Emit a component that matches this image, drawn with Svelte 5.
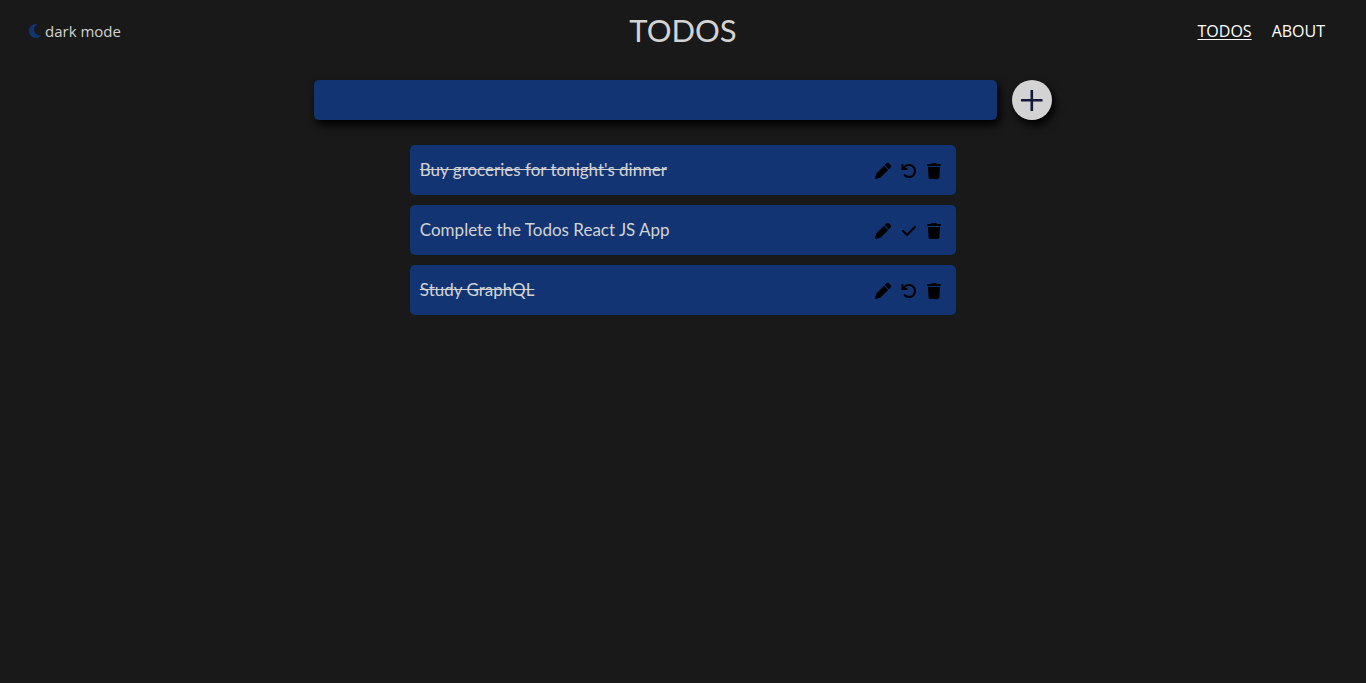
<script>
  let todos = $state([
    { text: "Buy groceries for tonight's dinner", done: true },
    { text: 'Complete the Todos React JS App', done: false },
    { text: 'Study GraphQL', done: true }
  ]);
  let draft = $state('');

  function add(event) {
    event.preventDefault();
    if (!draft.trim()) return;
    todos.push({ text: draft.trim(), done: false });
    draft = '';
  }
</script>

<header>
  <div class="side">
    <button class="mode" type="button">
      <svg class="moon" viewBox="0 0 384 512" aria-hidden="true"><path d="M223.5 32C100 32 0 132.3 0 256S100 480 223.5 480c60.6 0 115.5-24.2 155.8-63.4c5-4.9 6.3-12.5 3.1-18.7s-10.1-9.7-17-8.5c-9.8 1.7-19.8 2.6-30.1 2.6c-96.9 0-175.5-78.8-175.5-176c0-65.8 36-123.1 89.3-153.3c6.1-3.5 9.2-10.5 7.7-17.3s-7.3-11.9-14.3-12.5c-6.3-.5-12.6-.8-19-.8z" /></svg>
      <span>dark mode</span>
    </button>
  </div>
  <h1>TODOS</h1>
  <nav class="side">
    <a class="active" href="#todos">TODOS</a>
    <a href="#about">ABOUT</a>
  </nav>
</header>

<main>
  <form onsubmit={add}>
    <input type="text" aria-label="New todo" bind:value={draft} />
    <button class="add" type="submit" aria-label="Add todo">
      <svg viewBox="0 0 22 22" aria-hidden="true"><path d="M10.8 1v21M0 11.3h21.5" /></svg>
    </button>
  </form>

  <ul>
    {#each todos as todo, i}
      <li>
        <span class:done={todo.done}>{todo.text}</span>
        <div class="actions">
          <button type="button" aria-label="Edit">
            <svg viewBox="0 0 512 512" aria-hidden="true"><path d="M362.7 19.3L314.3 67.7 444.3 197.7l48.4-48.4c25-25 25-65.5 0-90.5L453.3 19.3c-25-25-65.5-25-90.5 0zm-71 71L58.6 323.5c-10.4 10.4-18 23.3-22.2 37.4L1 481.2C-1.5 489.7 .8 498.8 7 505s15.3 8.5 23.7 6.1l120.3-35.4c14.1-4.2 27-11.8 37.4-22.2L421.7 220.3 291.7 90.3z" /></svg>
          </button>
          <button type="button" aria-label={todo.done ? 'Undo' : 'Complete'} onclick={() => (todo.done = !todo.done)}>
            {#if todo.done}
              <svg viewBox="0 0 512 512" aria-hidden="true"><path d="M125.7 160H176c17.7 0 32 14.3 32 32s-14.3 32-32 32H48c-17.7 0-32-14.3-32-32V64c0-17.7 14.3-32 32-32s32 14.3 32 32v51.2L97.6 97.6c87.5-87.5 229.3-87.5 316.8 0s87.5 229.3 0 316.8s-229.3 87.5-316.8 0c-12.5-12.5-12.5-32.8 0-45.3s32.8-12.5 45.3 0c62.5 62.5 163.8 62.5 226.3 0s62.5-163.8 0-226.3s-163.8-62.5-226.3 0L125.7 160z" /></svg>
            {:else}
              <svg viewBox="-32 0 512 512" aria-hidden="true"><path d="M438.6 105.4c12.5 12.5 12.5 32.8 0 45.3l-256 256c-12.5 12.5-32.8 12.5-45.3 0l-128-128c-12.5-12.5-12.5-32.8 0-45.3s32.8-12.5 45.3 0L160 338.7 393.4 105.4c12.5-12.5 32.8-12.5 45.3 0z" /></svg>
            {/if}
          </button>
          <button type="button" aria-label="Delete" onclick={() => todos.splice(i, 1)}>
            <svg class="trash" viewBox="0 0 448 512" aria-hidden="true"><path d="M135.2 17.7L128 32H32C14.3 32 0 46.3 0 64S14.3 96 32 96H416c17.7 0 32-14.3 32-32s-14.3-32-32-32H320l-7.2-14.3C307.4 6.8 296.3 0 284.2 0H163.8c-12.1 0-23.2 6.8-28.6 17.7zM416 128H32L53.2 467c1.6 25.3 22.6 45 47.9 45H346.9c25.3 0 46.3-19.7 47.9-45L416 128z" /></svg>
          </button>
        </div>
      </li>
    {/each}
  </ul>
</main>

<style>
  :global(body) {
    margin: 0;
    background: #191919;
    color: #d3d3d3;
    font-family: 'Open Sans', sans-serif;
    font-size: 16px;
  }
  button {
    padding: 0;
    border: 0;
    background: none;
    color: inherit;
    font: inherit;
    cursor: pointer;
  }
  svg {
    display: block;
    width: 16px;
    height: 16px;
    fill: currentColor;
  }
  header {
    display: flex;
    align-items: center;
    height: 60px;
    padding: 0 41px 0 29px;
  }
  .side {
    flex: 1;
    display: flex;
    align-items: center;
    padding-top: 2px;
  }
  nav.side {
    justify-content: flex-end;
    gap: 20px;
    margin-left: -12px;
  }
  .mode {
    display: flex;
    align-items: center;
    gap: 4px;
    font-size: 15px;
    line-height: 22px;
  }
  .moon {
    width: 12px;
    color: #123473;
  }
  h1 {
    margin: 0;
    font: 400 31px/40px Lato, sans-serif;
  }
  nav a {
    color: #fff;
    font-weight: 500;
    line-height: 22px;
    text-decoration: none;
  }
  nav a.active {
    text-decoration: underline;
    text-underline-offset: 2px;
  }
  main {
    display: flex;
    flex-direction: column;
    align-items: center;
    gap: 25px;
    padding-top: 20px;
  }
  form {
    display: flex;
    gap: 15px;
  }
  input {
    box-sizing: border-box;
    width: 50vw;
    height: 40px;
    padding: 0 10px;
    border: 0;
    border-radius: 5px;
    outline: 0;
    background: #123473;
    box-shadow: 3px 5px 8px #000;
    color: inherit;
    font: inherit;
  }
  .add {
    display: grid;
    place-items: center;
    width: 40px;
    height: 40px;
    border-radius: 50%;
    background: #d3d3d3;
    box-shadow: 3px 5px 8px #000;
  }
  .add svg {
    width: 22px;
    height: 22px;
    fill: none;
    stroke: #14193a;
    stroke-width: 2.6;
  }
  ul {
    display: flex;
    flex-direction: column;
    gap: 10px;
    width: 40vw;
    margin: 0;
    padding: 0;
    list-style: none;
  }
  li {
    display: flex;
    align-items: center;
    justify-content: space-between;
    min-height: 50px;
    padding: 0 15px 0 10px;
    border-radius: 5px;
    background: #123473;
    font-family: Lato, sans-serif;
    font-size: 17px;
    line-height: 20px;
    box-sizing: border-box;
  }
  .done {
    text-decoration: line-through;
  }
  .actions {
    display: flex;
    gap: 10px;
    padding-top: 2px;
    color: #000;
  }
  .trash {
    width: 14px;
  }
</style>
